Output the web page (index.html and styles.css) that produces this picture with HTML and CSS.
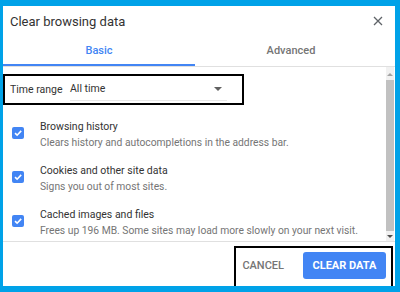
FILE: index.html
```html
<!DOCTYPE html>
<html lang="en">
<head>
    <meta charset="UTF-8">
    <title>Clear browsing data</title>
    <link rel="stylesheet" href="styles.css">
</head>
<body>
    <div class="dialog">
        <div class="dialog-header">
            <h2 class="dialog-title">Clear browsing data</h2>
            <svg class="close-icon" width="10" height="10" viewBox="0 0 10 10">
                <path d="M1 1 L9 9 M9 1 L1 9" stroke="#5f6368" stroke-width="1.3" fill="none"/>
            </svg>
        </div>
        <div class="tabs">
            <div class="tab active">Basic</div>
            <div class="tab">Advanced</div>
        </div>
        <div class="dialog-body">
            <div class="scroll-content">
                <div class="time-range">
                    <span class="time-label">Time range</span>
                    <div class="select">
                        <span>All time</span>
                        <span class="select-arrow"></span>
                    </div>
                </div>
                <div class="options">
                    <div class="option">
                        <span class="checkbox">
                            <svg width="12" height="12" viewBox="0 0 12 12"><path d="M3 6.2 L5.1 8.2 L9.2 3.9" stroke="#fff" stroke-width="1.6" fill="none"/></svg>
                        </span>
                        <div class="option-text">
                            <p class="option-title">Browsing history</p>
                            <p class="option-desc">Clears history and autocompletions in the address bar.</p>
                        </div>
                    </div>
                    <div class="option">
                        <span class="checkbox">
                            <svg width="12" height="12" viewBox="0 0 12 12"><path d="M3 6.2 L5.1 8.2 L9.2 3.9" stroke="#fff" stroke-width="1.6" fill="none"/></svg>
                        </span>
                        <div class="option-text">
                            <p class="option-title">Cookies and other site data</p>
                            <p class="option-desc">Signs you out of most sites.</p>
                        </div>
                    </div>
                    <div class="option">
                        <span class="checkbox">
                            <svg width="12" height="12" viewBox="0 0 12 12"><path d="M3 6.2 L5.1 8.2 L9.2 3.9" stroke="#fff" stroke-width="1.6" fill="none"/></svg>
                        </span>
                        <div class="option-text">
                            <p class="option-title">Cached images and files</p>
                            <p class="option-desc">Frees up 196 MB. Some sites may load more slowly on your next visit.</p>
                        </div>
                    </div>
                </div>
            </div>
            <div class="scrollbar">
                <span class="scroll-up"></span>
                <div class="scroll-thumb"></div>
                <span class="scroll-down"></span>
            </div>
        </div>
        <div class="dialog-footer">
            <div class="actions">
                <button class="btn-cancel">CANCEL</button>
                <button class="btn-clear">CLEAR DATA</button>
            </div>
        </div>
    </div>
</body>
</html>
```

FILE: styles.css
```css
body {
    margin: 0;
    padding: 6px 5px 6px 3px;
    background: #00a2e8;
    font-family: Roboto, 'Liberation Sans', sans-serif;
    overflow: hidden;
}
.dialog {
    width: 392px;
    height: 280px;
    background: #fff;
    display: flex;
    flex-direction: column;
    overflow: hidden;
}
.dialog-header {
    height: 30px;
    display: flex;
    align-items: center;
    justify-content: space-between;
    padding: 0 12px 0 7px;
}
.dialog-title {
    margin: 0;
    font-size: 13px;
    font-weight: 400;
    color: #333;
}
.tabs {
    display: flex;
    height: 30px;
    border-bottom: 1px solid #e0e0e0;
    padding-right: 8px;
}
.tab {
    flex: 1;
    display: flex;
    align-items: center;
    justify-content: center;
    font-size: 11px;
    font-weight: 500;
    color: #757575;
    border-bottom: 2px solid transparent;
}
.tab.active {
    color: #4285f4;
    border-bottom-color: #4285f4;
}
.dialog-body {
    flex: 1;
    display: flex;
    min-height: 0;
}
.scroll-content {
    flex: 1;
    overflow: hidden;
}
.time-range {
    margin-top: 7px;
    width: 237px;
    height: 27px;
    border: 2px solid #000;
    display: flex;
    align-items: center;
    font-size: 10.5px;
    color: #333;
}
.time-label {
    padding-left: 5px;
    width: 60px;
}
.select {
    width: 157px;
    height: 18px;
    margin-top: 4px;
    border-bottom: 1px solid #e8e8e8;
    display: flex;
    justify-content: space-between;
    align-items: flex-start;
}
.select-arrow {
    margin: 5px 5px 0 0;
    border-left: 4px solid transparent;
    border-right: 4px solid transparent;
    border-top: 4px solid #616161;
}
.options {
    margin-top: 9px;
}
.option {
    height: 44px;
    display: flex;
    align-items: flex-start;
    padding-top: 5px;
    box-sizing: border-box;
}
.checkbox {
    width: 12px;
    height: 12px;
    margin: 8px 16px 0 9px;
    border-radius: 2px;
    background: #4285f4;
    display: flex;
    flex-shrink: 0;
}
.option-text p {
    margin: 0;
    white-space: nowrap;
}
.option-title {
    font-size: 10.5px;
    line-height: 16px;
    color: #333;
}
.option-desc {
    font-size: 10.3px;
    line-height: 15px;
    color: #757575;
}
.scrollbar {
    width: 8px;
    margin-right: 1px;
    background: #f1f1f1;
    display: flex;
    flex-direction: column;
    align-items: center;
    padding: 6px 0 3px;
}
.scroll-up {
    border-left: 3px solid transparent;
    border-right: 3px solid transparent;
    border-bottom: 3px solid #a3a3a3;
}
.scroll-thumb {
    flex: 1;
    width: 8px;
    margin: 4px 0;
    background: #c1c1c1;
}
.scroll-down {
    border-left: 3px solid transparent;
    border-right: 3px solid transparent;
    border-top: 3px solid #505050;
}
.dialog-footer {
    height: 44px;
    border-top: 1px solid #e0e0e0;
    display: flex;
    justify-content: flex-end;
    align-items: flex-end;
    padding-right: 2px;
}
.actions {
    height: 34px;
    border: 2px solid #000;
    border-bottom: none;
    display: flex;
    align-items: flex-start;
    gap: 13px;
    padding: 4px 5px 0 0;
}
.actions button {
    font-family: inherit;
    font-size: 11px;
    font-weight: 700;
    border: none;
    height: 27px;
    cursor: pointer;
}
.btn-cancel {
    background: none;
    color: #757575;
    padding: 0 6px;
    font-weight: 500 !important;
}
.btn-clear {
    background: #4285f4;
    color: #fff;
    width: 83px;
    border-radius: 3px;
}
```
